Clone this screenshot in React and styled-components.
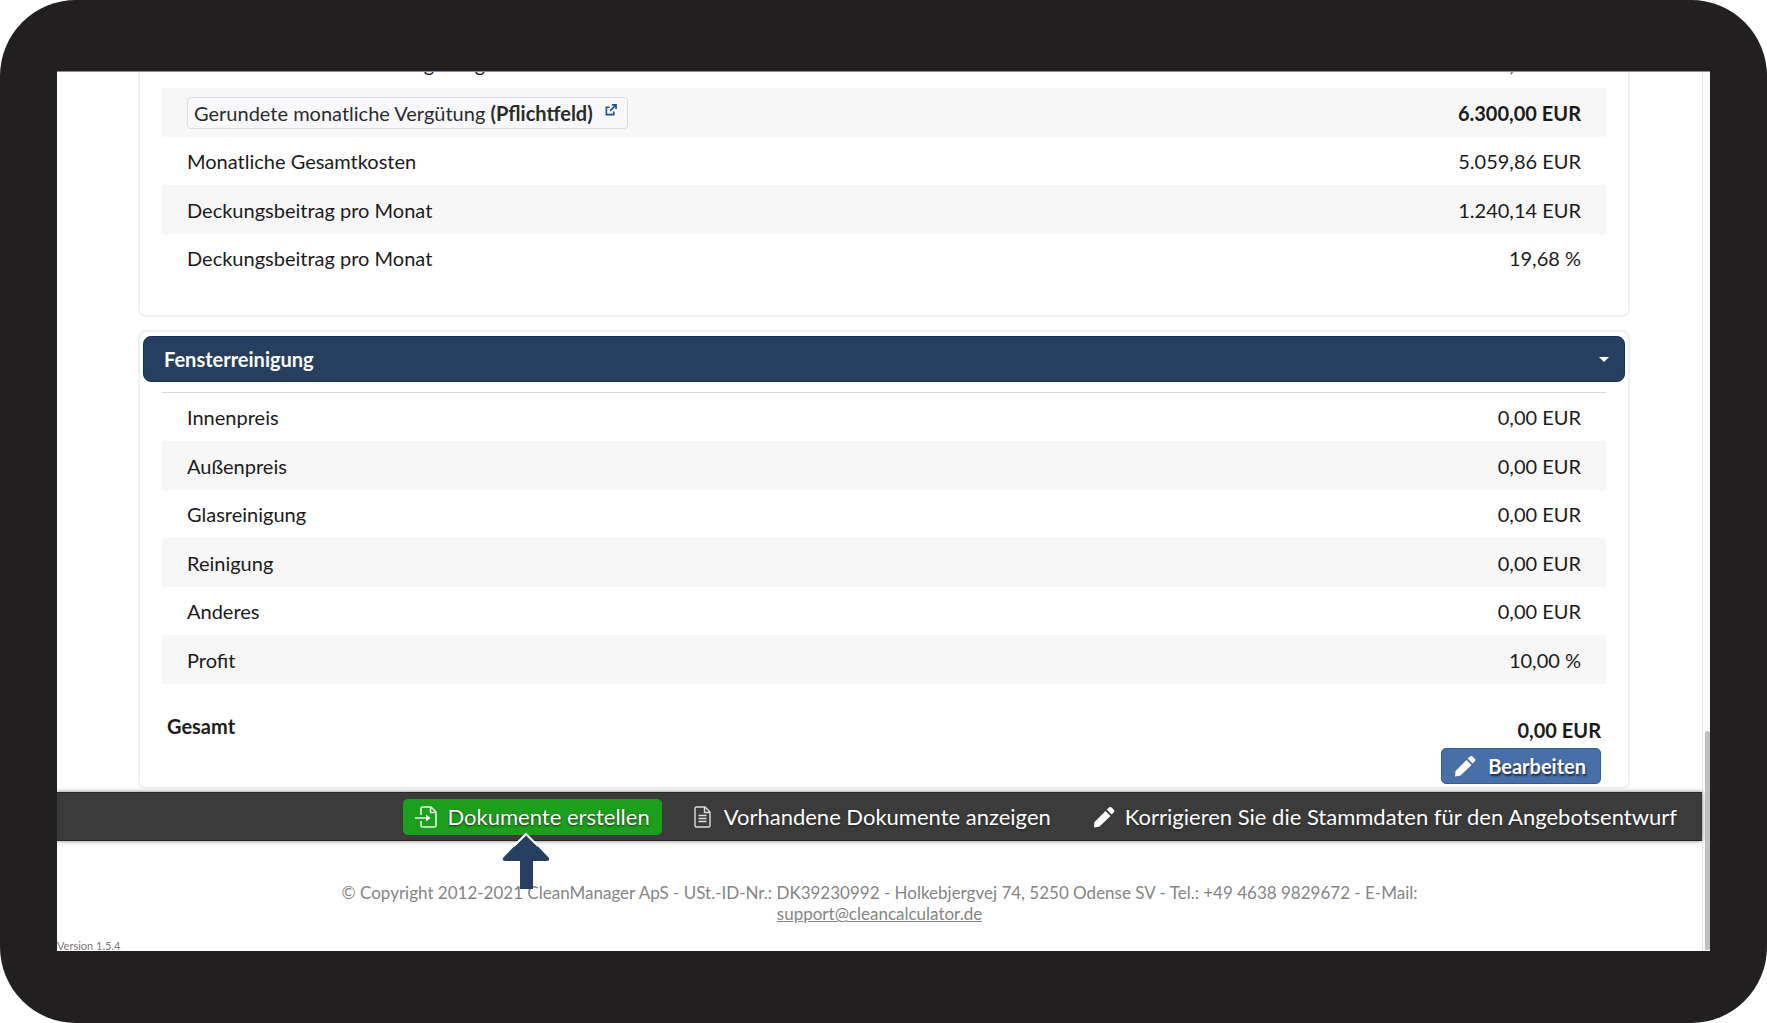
import React from "react";
import styled, { createGlobalStyle } from "styled-components";

const Global = createGlobalStyle`
  *, *::before, *::after { box-sizing: border-box; }
  html, body, #root { height: 100%; }
  body { margin: 0; background: #fff; color: #1b1b1b; font-family: Lato, "Open Sans", sans-serif; font-size: 20px; line-height: 28px; }
`;
const Device = styled.div`
  height: 100vh; min-height: 600px; padding: 71px 57px 72px; display: flex;
  background: #221f20; border-radius: 76px;
`;
const Screen = styled.div`
  flex: 1; min-width: 0; display: flex; background: #fff; overflow: hidden; border-top: 1px solid #8d8b8b;
`;
const Page = styled.div`
  flex: 1; min-width: 0; display: flex; flex-direction: column; justify-content: flex-end;
`;
const ScrollTrack = styled.div`
  width: 8px; display: flex; flex-direction: column; justify-content: flex-end; align-items: flex-end;
  padding-bottom: 1px; background: #fafafa; border-left: 1px solid #e8e8e8;
`;
const ScrollThumb = styled.div`
  width: 5px; height: 25%; border-radius: 3px; background: #bfbfbf;
`;
const Card = styled.section`
  flex: none; margin: 0 72px ${p => p.$gap}px 81px; padding: 4px 3px ${p => p.$bottom}px;
  border: 2px solid #f0f0f0; border-radius: 8px;
`;
const CardHeader = styled.button`
  width: 100%; height: 46px; padding: 0 15px 0 20px; display: flex; align-items: center; justify-content: space-between;
  border: 1px solid #15305a; border-radius: 8px; background: #263e60; color: #fff; font: inherit; font-weight: 700;
`;
const Caret = styled.span`
  border: 5px solid transparent; border-top-color: #fff; border-bottom: 0;
`;
const Body = styled.div`
  margin: ${p => p.$top}px 19px 0; border-top: ${p => (p.$line ? "1px solid #d8d8d8" : "0")};
`;
const Table = styled.table`
  width: 100%; border-collapse: collapse;
`;
const Row = styled.tr`
  height: ${p => (p.$striped ? 49 : 48)}px; background: ${p => (p.$striped ? "#f7f7f7" : "transparent")};
`;
const Label = styled.th`
  padding: 0 25px; text-align: left; font-weight: 400;
`;
const Value = styled.td`
  padding: 0 25px; text-align: right; font-weight: ${p => (p.$bold ? 700 : 400)};
`;
const FieldLink = styled.a`
  display: inline-flex; align-items: center; gap: 12px; height: 32px; padding: 0 10px 0 6px;
  border: 1px solid #dcdce8; border-radius: 4px; background: #f9f9fb; color: #2b2b2b; text-decoration: none; white-space: pre;
  svg { margin-bottom: 6px; }
`;
const Total = styled.div`
  display: flex; justify-content: space-between; align-items: flex-start; padding: 28px 5px 0; font-weight: 700;
`;
const TotalSide = styled.div`
  display: flex; flex-direction: column; align-items: flex-end; gap: 4px; padding-top: 4px;
`;
const EditButton = styled.button`
  height: 36px; display: flex; align-items: center; gap: 12px; padding: 0 14px 0 12px;
  border: 1px solid #2f5c9d; border-radius: 5px; background: #486fa8; color: #fff; font: inherit; font-weight: 700;
  text-shadow: 1px 2px 2px #14294a;
`;
const Toolbar = styled.nav`
  flex: none; height: 49px; padding: 0 13px; display: flex; justify-content: flex-end; align-items: center; gap: 18px;
  background: #3b3b3b; border: solid #262626; border-width: 1px 0; box-shadow: 0 0 4px #777; z-index: 1;
`;
const ToolButton = styled.button`
  position: relative; height: 36px; display: flex; align-items: center; gap: 10px; padding: 0 12px;
  border: 0; border-radius: 5px; background: ${p => (p.$primary ? "#1c9f1c" : "transparent")};
  color: #fff; font: inherit; font-size: 22px; white-space: nowrap; text-shadow: 0 1px 2px #222;
`;
const Pointer = styled.svg`
  position: absolute; left: 98px; top: 33px; width: 50px; height: 58px;
`;
const Footer = styled.footer`
  flex: none; padding: 41px 16% 17px; text-align: center; color: #858585; font-size: 17px; line-height: 21px;
`;
const MailLink = styled.a`
  color: inherit; text-decoration: underline;
`;
const Version = styled.small`
  flex: none; color: #777; font-size: 11px; line-height: 10px;
`;

const ExternalIcon = () => (
  <svg width="12" height="12" viewBox="0 0 13 13" fill="none" stroke="#1c5790" strokeWidth="1.8">
    <path d="M5 3.500H1.500v8h8V8M7.500 1H12v4.500M12 1 5.500 7.500" />
  </svg>
);
const PencilIcon = () => (
  <svg width="22" height="22" viewBox="0 0 22 22" fill="#fff">
    <path d="M1 21.500 1.500 16 12.500 5 17.500 10 6.500 20.500ZM13.800 3.700 16.200 1.300Q17.300.5 18.300 1.300L21 4Q21.800 5 21 6L18.700 8.500Z" />
  </svg>
);
const DocIcon = () => (
  <svg width="22" height="22" viewBox="0 0 22 22" fill="none" stroke="#ddd" strokeWidth="1.4">
    <path d="M4.500 1H13l5 5v13.500q0 1.500-1.500 1.500h-12Q3 21 3 19.500v-17Q3 1 4.500 1ZM12.500 1v5.500H18M6.500 9.500h8M6.500 12.500h8M6.500 15.500h8" />
  </svg>
);
const CreateIcon = () => (
  <svg width="22" height="22" viewBox="0 0 22 22" fill="none" stroke="#e6f5e6" strokeWidth="1.6">
    <path d="M6 9V2.500Q6 1 7.500 1H16l5 5v13.500q0 1.500-1.500 1.500h-12Q6 21 6 19.500V15M15.500 1v5.500H21M0 12h13" />
    <path d="m11 8.500 4.500 3.500L11 15.500Z" fill="#fff" stroke="none" />
  </svg>
);

function Rows({ items }) {
  return (
    <Table>
      <tbody>
        {items.map(([label, value, bold], i) => (
          <Row key={i} $striped={i % 2 === 1}>
            <Label scope="row">{label}</Label>
            <Value $bold={bold}>{value}</Value>
          </Row>
        ))}
      </tbody>
    </Table>
  );
}

const monthly = [
  ["Berechnete monatliche Vergütung", "6.299,50 EUR"],
  [<FieldLink href="#pflichtfeld"><span>Gerundete monatliche Vergütung <b>(Pflichtfeld)</b></span><ExternalIcon /></FieldLink>, "6.300,00 EUR", true],
  ["Monatliche Gesamtkosten", "5.059,86 EUR"],
  ["Deckungsbeitrag pro Monat", "1.240,14 EUR"],
  ["Deckungsbeitrag pro Monat", "19,68 %"],
];
const windows = [
  ["Innenpreis", "0,00 EUR"],
  ["Außenpreis", "0,00 EUR"],
  ["Glasreinigung", "0,00 EUR"],
  ["Reinigung", "0,00 EUR"],
  ["Anderes", "0,00 EUR"],
  ["Profit", "10,00 %"],
];

export default function App() {
  return (
    <>
      <Global />
      <Device>
        <Screen>
          <Page>
            <Card $gap={13} $bottom={33}>
              <Body $top={0}><Rows items={monthly} /></Body>
            </Card>
            <Card $gap={3} $bottom={3}>
              <CardHeader type="button">Fensterreinigung<Caret /></CardHeader>
              <Body $top={10} $line>
                <Rows items={windows} />
                <Total>
                  <span>Gesamt</span>
                  <TotalSide>
                    <span>0,00 EUR</span>
                    <EditButton type="button"><PencilIcon />Bearbeiten</EditButton>
                  </TotalSide>
                </Total>
              </Body>
            </Card>
            <Toolbar>
              <ToolButton type="button" $primary>
                <CreateIcon />Dokumente erstellen
                <Pointer viewBox="0 0 50 58">
                  <path d="M25 2 48 26q1 3-2 3H32v28H19V29H4q-3 0-2-3Z" fill="#263e60" />
                  <path d="M13 14 25 2 37 14" fill="none" stroke="#fff" strokeWidth="2" />
                </Pointer>
              </ToolButton>
              <ToolButton type="button"><DocIcon />Vorhandene Dokumente anzeigen</ToolButton>
              <ToolButton type="button"><PencilIcon />Korrigieren Sie die Stammdaten für den Angebotsentwurf</ToolButton>
            </Toolbar>
            <Footer>
              © Copyright 2012-2021 CleanManager ApS - USt.-ID-Nr.: DK39230992 - Holkebjergvej 74, 5250 Odense SV - Tel.: +49 4638 9829672 - E-Mail: <MailLink href="mailto:support@cleancalculator.de">support@cleancalculator.de</MailLink>
            </Footer>
            <Version>Version 1.5.4</Version>
          </Page>
          <ScrollTrack><ScrollThumb /></ScrollTrack>
        </Screen>
      </Device>
    </>
  );
}
